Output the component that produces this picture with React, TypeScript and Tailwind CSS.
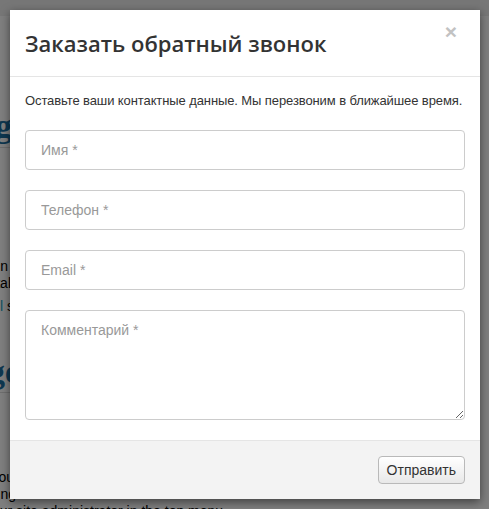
import React from "react";

function Cut({ w, children, className }: { w: string; children: React.ReactNode; className?: string }) {
  return (
    <div className={`flex justify-end ${w} ${className ?? ""}`}>
      <span className="whitespace-nowrap">{children}</span>
    </div>
  );
}

export default function App() {
  return (
    <div className="relative h-[509px] w-[489px] overflow-hidden bg-white">
      {/* underlying page */}
      <div className="flex flex-col font-['Liberation_Sans',Arial,sans-serif] text-[14px] text-black">
        <div className="h-[16px] bg-[#eeeeee]" />
        <div className="h-[94px]" />
        <Cut w="w-[12px]" className="font-['Liberation_Serif',serif] text-[34px] leading-[32px] font-bold text-[#1d6fa0]">Editing</Cut>
        <div className="mt-[5px] h-px w-[40px] bg-[#dddddd]" />
        <div className="h-[110px]" />
        <Cut w="w-[8px]" className="leading-[17px]">the main</Cut>
        <Cut w="w-[11px]" className="leading-[17px]">to the total</Cut>
        <div className="mt-[6px] flex w-[14px] justify-end leading-[17px]">
          <span className="whitespace-nowrap"><span className="text-[#22a0c0]">l</span> s</span>
        </div>
        <div className="h-[42px]" />
        <Cut w="w-[20px]" className="font-['Liberation_Serif',serif] text-[34px] leading-[30px] font-bold text-[#1d6fa0]">Manage</Cut>
        <div className="mt-[5px] h-px w-[40px] bg-[#dddddd]" />
        <div className="h-[76px]" />
        <Cut w="w-[14px]" className="leading-[17px]">settings of you</Cut>
        <Cut w="w-[16px]" className="leading-[17px]">by logging</Cut>
        <div className="-ml-[15px] whitespace-nowrap leading-[17px]">your site administrator in the top menu.</div>
      </div>

      {/* overlay */}
      <div className="absolute inset-0 bg-black/50 p-[10px]">
        <div className="flex h-[489px] w-[470px] flex-col bg-white font-['Liberation_Sans',Arial,sans-serif] text-[#333333] shadow-[0_3px_9px_rgba(0,0,0,0.5)]">
          <div className="relative flex h-[67px] items-center border-b border-[#e5e5e5] px-[15px]">
            <h4 className="font-['Open_Sans',sans-serif] text-[22px] font-semibold leading-none text-[#333333]">
              Заказать обратный звонок
            </h4>
            <span className="absolute right-[23px] top-[11px] text-[21px] font-bold leading-none text-[#c2c2c2]">×</span>
          </div>
          <div className="flex flex-col px-[15px] pt-[14px]">
            <p className="whitespace-nowrap text-[13px] leading-[20px] tracking-[-0.1px]">
              Оставьте ваши контактные данные. Мы перезвоним в ближайшее время.
            </p>
            <div className="mt-[19px] flex flex-col gap-[20px]">
              <input
                placeholder="Имя *"
                className="h-[40px] w-full rounded-[4px] border border-[#cccccc] px-[15px] text-[14px] placeholder:text-[#999999] outline-none"
              />
              <input
                placeholder="Телефон *"
                className="h-[40px] w-full rounded-[4px] border border-[#cccccc] px-[15px] text-[14px] placeholder:text-[#999999] outline-none"
              />
              <input
                placeholder="Email *"
                className="h-[40px] w-full rounded-[4px] border border-[#cccccc] px-[15px] text-[14px] placeholder:text-[#999999] outline-none"
              />
              <textarea
                placeholder="Комментарий *"
                className="block h-[110px] w-full resize-y rounded-[4px] border border-[#cccccc] px-[15px] py-[9px] text-[14px] placeholder:text-[#999999] outline-none"
              />
            </div>
          </div>
          <div className="mt-auto flex h-[59px] items-center justify-end border-t border-[#e5e5e5] bg-[#f3f3f3] px-[15px]">
            <button className="h-[28px] rounded-[4px] border border-[#b9b9b9] bg-gradient-to-b from-white to-[#e8e8e8] px-[8px] text-[14px] text-[#333333]">
              Отправить
            </button>
          </div>
        </div>
      </div>
    </div>
  );
}
